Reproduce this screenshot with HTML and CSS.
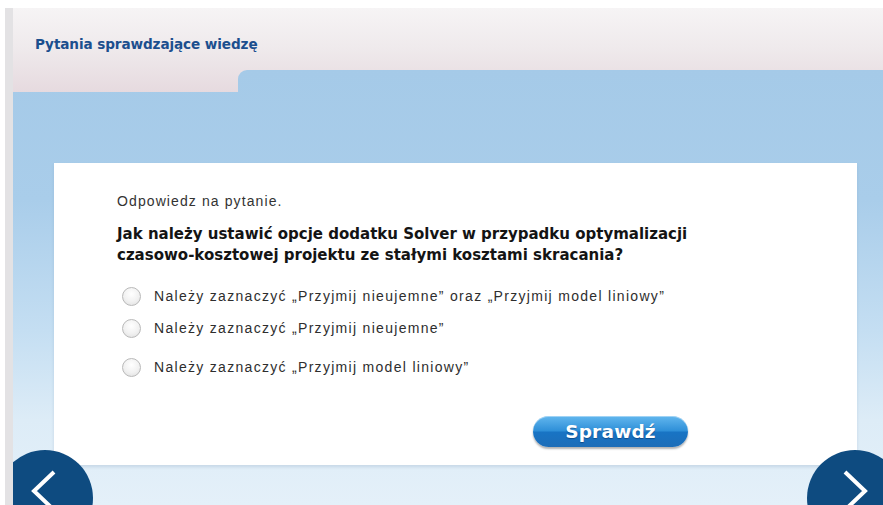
FILE: index.html
```html
<!DOCTYPE html>
<html lang="pl">
<head>
<meta charset="utf-8">
<title>Pytania sprawdzające wiedzę</title>
<link rel="stylesheet" href="styles.css">
</head>
<body>
<div class="frame">
  <header class="head">
    <h1 class="head-title">Pytania sprawdzające wiedzę</h1>
  </header>
  <div class="tabrow">
    <div class="tabrow-gap"></div>
    <div class="tab"></div>
  </div>
  <main class="board">
    <section class="card">
      <p class="lead">Odpowiedz na pytanie.</p>
      <h2 class="question">Jak należy ustawić opcje dodatku Solver w przypadku optymalizacji<br>czasowo-kosztowej projektu ze stałymi kosztami skracania?</h2>
      <ul class="options">
        <li class="option"><span class="radio"></span><span>Należy zaznaczyć „Przyjmij nieujemne” oraz „Przyjmij model liniowy”</span></li>
        <li class="option"><span class="radio"></span><span>Należy zaznaczyć „Przyjmij nieujemne”</span></li>
        <li class="option"><span class="radio"></span><span>Należy zaznaczyć „Przyjmij model liniowy”</span></li>
      </ul>
      <div class="actions">
        <button class="check-btn" type="button">Sprawdź</button>
      </div>
    </section>
  </main>
  <button class="nav nav-prev" type="button" aria-label="Wstecz">
    <svg width="30" height="44" viewBox="0 0 30 44"><path d="M25 3 L5 22 L25 41" fill="none" stroke="#fff" stroke-width="4" stroke-linejoin="miter"/></svg>
  </button>
  <button class="nav nav-next" type="button" aria-label="Dalej">
    <svg width="30" height="44" viewBox="0 0 30 44"><path d="M5 3 L25 22 L5 41" fill="none" stroke="#fff" stroke-width="4" stroke-linejoin="miter"/></svg>
  </button>
</div>
</body>
</html>
```

FILE: styles.css
```css
html, body {
  margin: 0;
  padding: 0;
  background: #ffffff;
  overflow: hidden;
}

body {
  width: 883px;
  height: 505px;
  padding: 8px 0 0 5px;
  box-sizing: border-box;
}

.frame {
  position: relative;
  height: 497px;
  border-left: 8px solid #e3e2e4;
  overflow: hidden;
  display: flex;
  flex-direction: column;
  background: linear-gradient(180deg, #f6f4f5 0px, #efeaec 40px, #e6dadf 84px);
}

.head {
  height: 62px;
  flex: none;
}

.head-title {
  margin: 0;
  padding: 28px 0 0 22px;
  font-family: "DejaVu Sans", Verdana, sans-serif;
  font-weight: bold;
  font-size: 13.6px;
  letter-spacing: -0.1px;
  color: #1c4f8e;
}

.tabrow {
  display: flex;
  height: 22px;
  flex: none;
}

.tabrow-gap {
  width: 225px;
  flex: none;
}

.tab,
.board {
  background: linear-gradient(180deg, #a5cae8 70px, #a9cdea 200px, #c4def2 330px, #ddecf7 420px, #e4f0f9 505px) fixed;
}

.tab {
  flex: 1;
  border-top-left-radius: 9px;
}

.board {
  flex: 1;
  padding: 71px 26px 0 41px;
}

.card {
  height: 302px;
  background: #ffffff;
  box-shadow: 0 2px 3px rgba(120, 150, 180, 0.25);
  padding: 30px 0 0 63px;
  box-sizing: border-box;
  font-family: "Liberation Sans", Arial, sans-serif;
  color: #2b2b2b;
}

.lead {
  margin: 0;
  font-size: 14px;
  letter-spacing: 1.1px;
  line-height: 16px;
  color: #333;
}

.question {
  margin: 15px 0 0;
  font-family: "DejaVu Sans", Verdana, sans-serif;
  font-weight: bold;
  font-size: 15px;
  line-height: 21px;
  color: #141414;
}

.options {
  list-style: none;
  margin: 20px 0 0;
  padding: 0 0 0 5px;
}

.option {
  display: flex;
  align-items: center;
  gap: 13px;
  height: 20px;
  font-size: 14px;
  letter-spacing: 1.3px;
  color: #2e2e2e;
}

.option + .option {
  margin-top: 12px;
}

.option + .option + .option {
  margin-top: 19px;
}

.radio {
  width: 19px;
  height: 19px;
  border-radius: 50%;
  box-sizing: border-box;
  border: 1px solid #b9b9b9;
  background: radial-gradient(circle at 50% 35%, #ffffff 0%, #f1f1f1 55%, #dcdcdc 100%);
  flex: none;
}

.actions {
  display: flex;
  padding: 39px 0 0 416px;
}

.check-btn {
  width: 155px;
  height: 31px;
  border: 0;
  border-radius: 16px;
  background: linear-gradient(180deg, #62b7ee 0%, #2e8fd8 48%, #1874c4 52%, #1d6db8 100%);
  box-shadow: 0 2px 2px rgba(0, 0, 0, 0.3), inset 0 1px 0 rgba(255, 255, 255, 0.4);
  color: #ffffff;
  font-family: "DejaVu Sans", Verdana, sans-serif;
  font-weight: bold;
  font-size: 18.5px;
  letter-spacing: 0.2px;
  text-shadow: 0 1px 1px rgba(0, 40, 90, 0.5);
  cursor: pointer;
  padding: 0;
}

/* round arrows sitting over the bottom corners */
.nav {
  position: absolute;
  top: 442px;
  width: 96px;
  height: 96px;
  border-radius: 50%;
  border: 0;
  padding: 0;
  background: #0e4b80;
  display: flex;
  align-items: flex-start;
  justify-content: center;
  cursor: pointer;
}

.nav svg {
  margin-top: 19px;
}

.nav-prev {
  left: -16px;
}

.nav-prev svg {
  margin-left: -2px;
}

.nav-next {
  left: 794px;
}
```
